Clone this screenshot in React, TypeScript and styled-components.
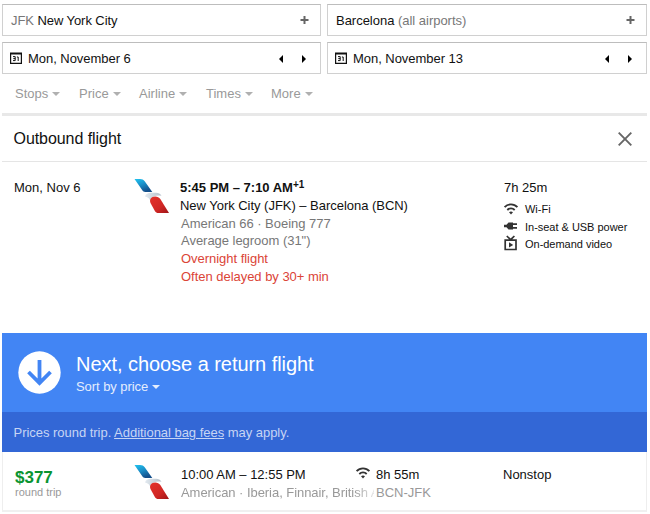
import React from 'react';
import styled, { createGlobalStyle } from 'styled-components';

const GlobalStyle = createGlobalStyle`
  * { box-sizing: border-box; }
  body { margin: 0; background: #fff; }
`;

const Page = styled.div`
  width: 650px;
  height: 514px;
  overflow: hidden;
  padding: 4px 3px 0 2px;
  display: flex;
  flex-direction: column;
  background: #fff;
  color: #111;
  font-family: 'Liberation Sans', Arial, sans-serif;
  font-size: 13px;
  line-height: 18px;
  white-space: nowrap;
`;

const SearchGrid = styled.div`
  display: grid;
  grid-template-columns: 319px 320px;
  grid-template-rows: 32px 32px;
  column-gap: 6px;
  row-gap: 6px;
`;

const Field = styled.div`
  display: flex;
  align-items: center;
  border: 1px solid #d0d0d0;
  border-top-color: #bdbdbd;
  padding: 1px 11px 0 8px;
`;

const FieldText = styled.span<{ $spacing?: number }>`
  flex: 1;
  letter-spacing: ${(p) => p.$spacing ?? 0}px;
`;

const Muted = styled.span`
  color: #777;
`;

const CalendarSvg = styled.svg`
  width: 12px;
  height: 12px;
  margin: -1px 6px 0 -1px;
`;

const Steppers = styled.span`
  display: flex;
  gap: 19px;
  margin-right: 3px;
`;

const Filters = styled.div`
  display: flex;
  height: 39px;
  padding: 1px 0 0 13px;
  align-items: center;
  color: #999;
`;

const Filter = styled.div<{ $width: number }>`
  display: flex;
  align-items: center;
  gap: 4px;
  width: ${(p) => p.$width}px;
`;

const Caret = styled.span`
  border: 4px solid transparent;
  border-top-color: currentColor;
  border-bottom: 0;
`;

const FilterCaret = styled(Caret)`
  color: #b0b0b0;
`;

const SectionHead = styled.header`
  display: flex;
  height: 49px;
  align-items: center;
  justify-content: space-between;
  padding: 1px 15px 0 11.5px;
  border-top: 3px solid #e8e8e8;
  border-bottom: 1px solid #e5e5e5;
`;

const SectionTitle = styled.h2`
  margin: 0;
  font-size: 16px;
  font-weight: 400;
  letter-spacing: -0.06px;
`;

const Outbound = styled.section`
  display: grid;
  grid-template-columns: 120px 46px 324px 1fr;
  height: 171px;
  padding: 17px 0 0 12px;
`;

const LogoSvg = styled.svg`
  width: 36px;
  height: 36px;
  margin-top: -1px;
`;

const Lines = styled.div`
  display: flex;
  flex-direction: column;
`;

const Line = styled.div<{ $color?: string; $bold?: boolean; $spacing?: number; $indent?: number }>`
  height: 17.8px;
  line-height: 18px;
  color: ${(p) => p.$color ?? '#111'};
  font-weight: ${(p) => (p.$bold ? 700 : 400)};
  letter-spacing: ${(p) => p.$spacing ?? 0}px;
  padding-left: ${(p) => p.$indent ?? 0}px;
`;

const DayOffset = styled.sup`
  font-size: 10px;
  line-height: 0;
  vertical-align: 4px;
`;

const Amenity = styled.div`
  display: flex;
  align-items: center;
  height: 17.8px;
  gap: 7px;
  font-size: 11px;
  letter-spacing: -0.02px;
`;

const Amenities = styled.div`
  padding-top: 3px;
`;

const AmenityIcon = styled.svg`
  width: 14px;
  height: 14px;
  overflow: visible;
`;

const Banner = styled.section`
  display: flex;
  height: 79px;
  padding-left: 16px;
  align-items: center;
  gap: 15px;
  background: #4285f4;
  color: #fff;
`;

const ArrowSvg = styled.svg`
  width: 43px;
  height: 43px;
  margin-top: -1px;
`;

const BannerText = styled.div`
  padding-top: 3px;
`;

const BannerTitle = styled.h1`
  margin: 0;
  font-size: 20px;
  line-height: 24px;
  font-weight: 400;
  letter-spacing: -0.05px;
`;

const Sort = styled.div`
  display: flex;
  align-items: center;
  gap: 4px;
  padding-top: 2px;
  letter-spacing: -0.06px;
  color: #e4edfd;
`;

const Notice = styled.div`
  height: 40px;
  padding: 2px 0 0 11.5px;
  line-height: 38px;
  letter-spacing: -0.03px;
  background: #3367d6;
  color: #c7d5f4;
`;

const BagLink = styled.span`
  text-decoration: underline;
`;

const Result = styled.section`
  display: grid;
  grid-template-columns: 119px 46px 176px 147px 1fr;
  height: 60px;
  padding: 13px 0 0 12px;
  border-bottom: 2px solid #f0f0f0;
  border-left: 1px solid #eee;
  border-right: 1px solid #eee;
`;

const Price = styled.div`
  color: #0a9431;
  font-size: 17px;
  font-weight: 700;
  line-height: 25px;
`;

const PriceNote = styled.div`
  color: #999;
  font-size: 11px;
  line-height: 5px;
`;

const ResultLines = styled(Lines)`
  padding-top: 1px;
`;

const Carriers = styled(Line)`
  width: 194px;
  overflow: hidden;
  mask-image: linear-gradient(to right, #000 174px, transparent 200px);
`;

const Duration = styled.div`
  display: flex;
  gap: 6px;
  height: 17.8px;
`;

const CalendarIcon = () => (
  <CalendarSvg viewBox="0 0 12 12">
    <path d="M.6 1.500h10.800v9.900H.6z" fill="none" stroke="#111" strokeWidth="1.200" />
    <path d="M0 .5h12v2H0z" fill="#111" />
    <path d="M3 4.600h2.200v4H3M3.300 6.600h1.900M6.900 5h1.300v4" fill="none" stroke="#111" strokeWidth="1" />
  </CalendarSvg>
);

const PlusIcon = () => (
  <svg width="9" height="9" viewBox="0 0 9 9">
    <path d="M4.500 0v8M.5 4h8" stroke="#666" strokeWidth="2" />
  </svg>
);

const DateSteppers = () => (
  <Steppers>
    <svg width="4" height="8" viewBox="0 0 4 8"><path d="M4 0v8L0 4z" fill="#000" /></svg>
    <svg width="4" height="8" viewBox="0 0 4 8"><path d="M0 0v8l4-4z" fill="#000" /></svg>
  </Steppers>
);

const AirlineLogo = ({ id }: { id: string }) => (
  <LogoSvg viewBox="0 0 36 36">
    <defs>
      <linearGradient id={`${id}b`} x1="0" y1="0" x2=".5" y2="1">
        <stop offset="0" stopColor="#20c4f0" />
        <stop offset=".5" stopColor="#1b8fc8" />
        <stop offset="1" stopColor="#14508c" />
      </linearGradient>
      <linearGradient id={`${id}r`} x1="0" y1="0" x2="1" y2="1">
        <stop offset="0" stopColor="#e5322b" />
        <stop offset=".6" stopColor="#d02724" />
        <stop offset="1" stopColor="#9e1518" />
      </linearGradient>
      <linearGradient id={`${id}g`} x1="0" y1="0" x2="1" y2="0">
        <stop offset="0" stopColor="#e3eaf0" />
        <stop offset="1" stopColor="#b4c0ca" />
      </linearGradient>
    </defs>
    <path d="M.5 1h5.500c2.200 0 3.500.8 4.700 2.300L18.300 14h-7.100c-1.300 0-2.200-.6-2.900-1.700z" fill={`url(#${id}b)`} />
    <path d="M11 18.500c.6-2.400 3-3.700 6-3.700h5c2.500 0 4.500 1 5.500 3-3.200-.7-5.800-.3-7.700.8-2 1.200-2.900 2.600-2.900 5.400-1.200-3-2.700-5-5.900-5.500z" fill={`url(#${id}g)`} />
    <path d="M16.500 25c-1.400-3.600.6-6.400 4.600-6.600 2.400 0 4 .9 5.200 2.500L35 35H24.300c-1.500 0-2.500-.6-3.300-1.800z" fill={`url(#${id}r)`} />
  </LogoSvg>
);

const WifiIcon = () => (
  <AmenityIcon viewBox="0 0 14 14">
    <path d="M.6 5.200C4.100 1.400 9.900 1.400 13.400 5.200M3.300 8c2.100-2 5.300-2 7.400 0" fill="none" stroke="#333" strokeWidth="1.900" />
    <path d="M5 10.200c1.200-1 2.800-1 4 0l-2 2.200z" fill="#333" />
  </AmenityIcon>
);

const PlugIcon = () => (
  <AmenityIcon viewBox="0 0 14 14">
    <path d="M0 5.800h2.500L4.500 3.500H9v7H4.500L2.500 8.200H0z" fill="#333" />
    <path d="M9 5.200h4M9 8.800h4" stroke="#333" strokeWidth="1.700" />
  </AmenityIcon>
);

const VideoIcon = () => (
  <AmenityIcon viewBox="0 0 14 14">
    <path d="M1.200 3.200h10.800v9.300H1.200zM2.800-1l3.800 3.700L10.400-1" fill="none" stroke="#333" strokeWidth="1.700" />
    <path d="M5 5.300v5.200l4.200-2.600z" fill="#333" />
  </AmenityIcon>
);

const filters: [string, number][] = [['Stops', 64], ['Price', 60], ['Airline', 67], ['Times', 65], ['More', 50]];

export default function App() {
  return (
    <Page>
      <GlobalStyle />
      <SearchGrid>
        <Field><FieldText $spacing={-0.07}><Muted>JFK</Muted> New York City</FieldText><PlusIcon /></Field>
        <Field><FieldText $spacing={-0.02}>Barcelona <Muted>(all airports)</Muted></FieldText><PlusIcon /></Field>
        <Field><CalendarIcon /><FieldText $spacing={-0.04}>Mon, November 6</FieldText><DateSteppers /></Field>
        <Field><CalendarIcon /><FieldText $spacing={-0.04}>Mon, November 13</FieldText><DateSteppers /></Field>
      </SearchGrid>
      <Filters>
        {filters.map(([name, width]) => (
          <Filter key={name} $width={width}>{name}<FilterCaret /></Filter>
        ))}
      </Filters>
      <SectionHead>
        <SectionTitle>Outbound flight</SectionTitle>
        <svg width="14" height="14" viewBox="0 0 14 14">
          <path d="M.7.7l12.600 12.600M13.300.7L.7 13.300" stroke="#666" strokeWidth="1.900" />
        </svg>
      </SectionHead>
      <Outbound>
        <Line>Mon, Nov 6</Line>
        <AirlineLogo id="outbound" />
        <Lines>
          <Line $bold>5:45 PM – 7:10 AM<DayOffset>+1</DayOffset></Line>
          <Line $spacing={-0.03}>New York City (JFK) – Barcelona (BCN)</Line>
          <Line $color="#777" $indent={1} $spacing={-0.03}>American 66 · Boeing 777</Line>
          <Line $color="#777" $indent={1} $spacing={-0.03}>Average legroom (31")</Line>
          <Line $color="#db4437" $indent={1} $spacing={-0.03}>Overnight flight</Line>
          <Line $color="#db4437" $indent={1} $spacing={-0.03}>Often delayed by 30+ min</Line>
        </Lines>
        <Lines>
          <Line>7h 25m</Line>
          <Amenities>
            <Amenity><WifiIcon />Wi-Fi</Amenity>
            <Amenity><PlugIcon />In-seat &amp; USB power</Amenity>
            <Amenity><VideoIcon />On-demand video</Amenity>
          </Amenities>
        </Lines>
      </Outbound>
      <Banner>
        <ArrowSvg viewBox="0 0 43 43">
          <circle cx="21.500" cy="21.500" r="21.200" fill="#fff" />
          <path d="M21.500 9v23M10.500 21l11 11 11-11" fill="none" stroke="#4285f4" strokeWidth="3.800" />
        </ArrowSvg>
        <BannerText>
          <BannerTitle>Next, choose a return flight</BannerTitle>
          <Sort>Sort by price<Caret /></Sort>
        </BannerText>
      </Banner>
      <Notice>Prices round trip. <BagLink>Additional bag fees</BagLink> may apply.</Notice>
      <Result>
        <div>
          <Price>$377</Price>
          <PriceNote>round trip</PriceNote>
        </div>
        <AirlineLogo id="return" />
        <ResultLines>
          <Line $indent={1} $spacing={-0.02}>10:00 AM – 12:55 PM</Line>
          <Carriers $color="#999" $indent={1} $spacing={-0.05}>American · Iberia, Finnair, British A</Carriers>
        </ResultLines>
        <ResultLines>
          <Duration><WifiIcon />8h 55m</Duration>
          <Line $color="#999" $indent={20}>BCN-JFK</Line>
        </ResultLines>
        <ResultLines>
          <Line>Nonstop</Line>
        </ResultLines>
      </Result>
    </Page>
  );
}
